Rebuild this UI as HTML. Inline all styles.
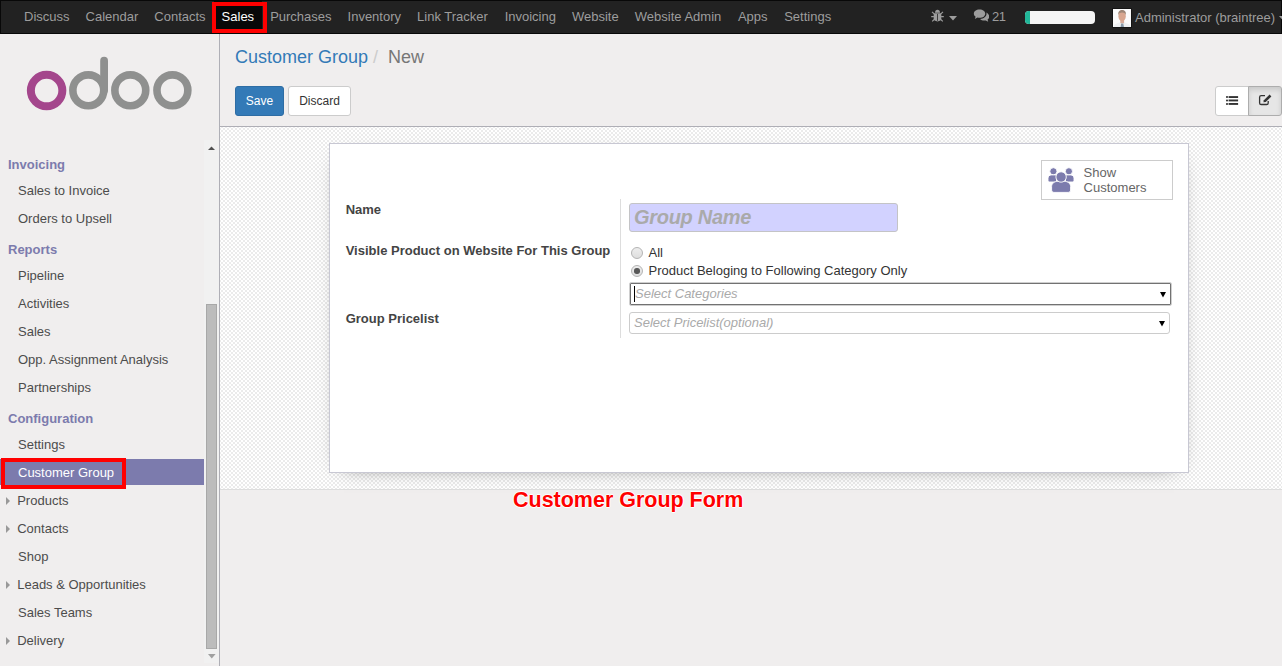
<!DOCTYPE html>
<html><head><meta charset="utf-8">
<style>
*{box-sizing:border-box}
html,body{margin:0;padding:0;width:1282px;height:666px;overflow:hidden;background:#f0eeee;font-family:"Liberation Sans",sans-serif;font-size:13px;color:#4c4c4c}
.a{position:absolute;white-space:nowrap}
#nav{position:absolute;left:0;top:0;width:1282px;height:34px;background:#222;border:1px solid #080808}
#nav ul{margin:0;padding:0;list-style:none;position:absolute;left:15px;top:0;display:flex;height:32px}
#nav li a{display:block;padding:0 8px;line-height:32px;color:#9d9d9d;white-space:nowrap}
#nav li.act a{background:#080808;color:#fff}
.red{position:absolute;border:4px solid #f00}
#side{position:absolute;left:0;top:34px;width:220px;height:632px;background:#f0eeee;border-right:1px solid #afafb6}
#cp{position:absolute;left:220px;top:34px;width:1062px;height:93px;background:#f0eeee;border-bottom:1px solid #afafb6}
#bgwrap{position:absolute;left:220px;top:127px;width:1062px;height:363px;border-bottom:1px solid #ddd}
#sheet{position:absolute;left:329px;top:143px;width:860px;height:330px;background:#fff;border:1px solid #c8c8d3;box-shadow:0 5px 20px -15px rgba(0,0,0,.85)}
.hdr{position:absolute;left:8px;font-weight:bold;color:#7c7bad;line-height:18px;white-space:nowrap}
.itm{position:absolute;left:0;width:204px;padding:5px 0 3px 18px;color:#4c4c4c;line-height:18px;white-space:nowrap}
.itm.act{background:#7c7bad;color:#fff}
.car{position:absolute;left:6px;top:10px;width:0;height:0;border-top:4px solid transparent;border-bottom:4px solid transparent;border-left:4px solid #999}
.lbl{position:absolute;left:345.7px;font-weight:bold;color:#444;white-space:nowrap;line-height:18px}
.btn{position:absolute;height:30px;border:1px solid #ccc;border-radius:3px;font-size:12px;line-height:28px;text-align:center}
.ph{color:#aaa;font-style:italic}
</style></head><body>

<div id="nav">
  <ul>
    <li><a>Discuss</a></li>
    <li><a>Calendar</a></li>
    <li><a>Contacts</a></li>
    <li class="act"><a>Sales</a></li>
    <li><a>Purchases</a></li>
    <li><a>Inventory</a></li>
    <li><a>Link Tracker</a></li>
    <li style="margin-left:0.8px"><a>Invoicing</a></li>
    <li><a>Website</a></li>
    <li style="margin-left:0.1px"><a>Website Admin</a></li>
    <li style="margin-left:0.7px"><a>Apps</a></li>
    <li style="margin-left:0.6px"><a>Settings</a></li>
  </ul>
  <!-- bug icon -->
  <svg class="a" style="left:928.2px;top:7px" width="17" height="17" viewBox="929 8 17 17">
    <g fill="#9d9d9d">
      <path d="M935 12.7C935 10.9 936 9.8 937.5 9.8S940 10.9 940 12.7Z"/>
      <path d="M933.7 13.2H941.3V18.6C941.3 20.3 939.9 21.4 937.5 21.4S933.7 20.3 933.7 18.6Z"/>
    </g>
    <path d="M932 11.8L934.2 13.9M943 11.8L940.8 13.9M931.2 16.6H933.9M943.8 16.6H941.1M932.2 21.4L934.2 19.5M942.8 21.4L940.8 19.5" stroke="#9d9d9d" stroke-width="1.1" fill="none"/>
    <rect x="937.1" y="13.8" width="0.9" height="7" fill="#333"/>
  </svg>
  <svg class="a" style="left:947.8px;top:15px" width="8" height="5" viewBox="0 0 8 5"><path d="M0 0H8L4 4.6Z" fill="#9d9d9d"/></svg>
  <!-- comments icon -->
  <svg class="a" style="left:971.5px;top:8.3px" width="16.8" height="13.1" viewBox="0 0 18 14">
    <path d="M7 0.6C3.4 0.6 0.9 2.6 0.9 5c0 1.3 0.7 2.4 1.9 3.2L2 10.6 4.8 9.1C5.5 9.3 6.2 9.4 7 9.4c3.6 0 6.1-2 6.1-4.4S10.6 0.6 7 0.6Z" fill="#9d9d9d"/>
    <path d="M14.2 3.8c0.2 0.4 0.3 0.8 0.3 1.2 0 3-3 5.4-6.9 5.6 1 1.1 2.6 1.8 4.4 1.8 0.6 0 1.2-0.1 1.7-0.2l2.6 1.4-0.7-2.3c1.2-0.7 1.9-1.8 1.9-3 0-1.8-1.3-3.5-3.3-4.5Z" fill="#9d9d9d"/>
  </svg>
  <div class="a" style="left:991px;top:0;line-height:32px;color:#9d9d9d;letter-spacing:-0.6px">21</div>
  <div class="a" style="left:1024px;top:10px;width:70px;height:13px;background:#f5f5f5;border-radius:4px;overflow:hidden"><div style="width:5px;height:13px;background:#21b799"></div></div>
  <!-- avatar -->
  <svg class="a" style="left:1111px;top:7px" width="20" height="20" viewBox="-1 -1 20 20">
    <rect x="-1" y="-1" width="20" height="20" fill="#151515"/>
    <rect width="18" height="18" fill="#fbfbfb"/>
    <path d="M0.5 18C1 15.2 4 13.6 9 13.6S17 15.2 17.5 18Z" fill="#eef0f2"/>
    <rect x="7.3" y="11" width="3.8" height="3.2" fill="#d9ab98"/>
    <ellipse cx="9.1" cy="7.2" rx="3.7" ry="5" fill="#d8a68f"/>
    <path d="M5.2 6.4C4.9 2.4 6.6 1 9.1 1S13.3 2.4 13 6.4C12.6 4.6 11.3 3.6 9.1 3.6S5.6 4.6 5.2 6.4Z" fill="#9e8676"/>
    <path d="M8.1 14.6H10.3L10.9 18H7.6Z" fill="#8798a8"/>
  </svg>
  <div class="a" style="left:1134px;top:1px;line-height:32px;color:#9d9d9d">Administrator (braintree)</div>
  <svg class="a" style="left:1278px;top:15px" width="8" height="5" viewBox="0 0 8 5"><path d="M0 0H8L4 4.6Z" fill="#9d9d9d"/></svg>
</div>
<div class="red" style="left:212px;top:2px;width:55px;height:31px"></div>

<!-- SIDEBAR -->
<div id="side">
  <svg class="a" style="left:0;top:0" width="219" height="106" viewBox="0 34 219 106">
    <circle cx="46.6" cy="90.6" r="15.75" fill="none" stroke="#a4468c" stroke-width="8"/>
    <circle cx="88.3" cy="90.3" r="15.45" fill="none" stroke="#8f908f" stroke-width="7.6"/>
    <line x1="104.1" y1="60.7" x2="104.1" y2="90.3" stroke="#8f908f" stroke-width="7.8" stroke-linecap="round"/>
    <circle cx="130.3" cy="90.3" r="15.45" fill="none" stroke="#8f908f" stroke-width="7.6"/>
    <circle cx="172.4" cy="90.3" r="15.45" fill="none" stroke="#8f908f" stroke-width="7.6"/>
  </svg>
  <!-- scroll area -->
  <div class="a" style="left:0;top:106px;width:219px;height:523px;overflow:hidden">
    <div style="position:absolute;left:0;top:-140px;width:219px;height:800px">
      <div class="hdr" style="top:155.5px">Invoicing</div>
      <div class="itm" style="top:177px">Sales to Invoice</div>
      <div class="itm" style="top:205px">Orders to Upsell</div>
      <div class="hdr" style="top:240.5px">Reports</div>
      <div class="itm" style="top:262px">Pipeline</div>
      <div class="itm" style="top:290px">Activities</div>
      <div class="itm" style="top:318px">Sales</div>
      <div class="itm" style="top:346px">Opp. Assignment Analysis</div>
      <div class="itm" style="top:374px">Partnerships</div>
      <div class="hdr" style="top:409.5px">Configuration</div>
      <div class="itm" style="top:431px">Settings</div>
      <div class="itm act" style="top:459px">Customer Group</div>
      <div class="itm" style="top:487px;padding-left:17.2px"><span class="car"></span>Products</div>
      <div class="itm" style="top:515px;padding-left:17.2px"><span class="car"></span>Contacts</div>
      <div class="itm" style="top:543px">Shop</div>
      <div class="itm" style="top:571px;padding-left:17.2px"><span class="car"></span>Leads &amp; Opportunities</div>
      <div class="itm" style="top:599px">Sales Teams</div>
      <div class="itm" style="top:627px;padding-left:17.2px"><span class="car"></span>Delivery</div>
    </div>
    <!-- scrollbar -->
    <div class="a" style="left:204px;top:0;width:15px;height:523px;background:#f1f1f1">
      <svg class="a" style="left:4px;top:5.5px" width="7" height="5" viewBox="0 0 7 5"><path d="M0 4H7L3.5 0.4Z" fill="#505050"/></svg>
      <div class="a" style="left:2px;top:164px;width:11px;height:345px;background:#bcbcbc;border:1px solid #a8a8a8"></div>
      <svg class="a" style="left:3.8px;top:513.5px" width="8" height="5" viewBox="0 0 8 5"><path d="M0 0H7.6L3.8 4.4Z" fill="#a0a0a0"/></svg>
    </div>
  </div>
</div>
<div class="red" style="left:1px;top:458px;width:125px;height:31px"></div>

<!-- CONTROL PANEL -->
<div id="cp">
  <div class="a" style="left:15px;top:11.6px;font-size:18px;line-height:22px"><span style="color:#337ab7">Customer Group</span><span style="color:#ccc;padding:0 5px">/&nbsp;</span><span style="color:#777">New</span></div>
  <div class="btn" style="left:15px;top:52px;width:49px;background:#337ab7;border-color:#2e6da4;color:#fff">Save</div>
  <div class="btn" style="left:68px;top:52px;width:63px;background:#fff;color:#333">Discard</div>
  <div class="a" style="left:995px;top:52px;width:67px;height:30px">
    <div class="a" style="left:0;top:0;width:34px;height:30px;background:#fff;border:1px solid #ccc;border-radius:3px 0 0 3px"></div>
    <div class="a" style="left:33px;top:0;width:34px;height:30px;background:#e6e6e6;border:1px solid #adadad;border-radius:0 3px 3px 0;box-shadow:inset 0 3px 5px rgba(0,0,0,.125)"></div>
    <svg class="a" style="left:5px;top:5px" width="60" height="20" viewBox="1220 91 60 20">
      <g fill="#333"><circle cx="1227" cy="97.05" r="1.05"/><circle cx="1227" cy="100.45" r="1.05"/><circle cx="1227" cy="103.95" r="1.05"/>
      <rect x="1228.6" y="96.1" width="9.5" height="1.9"/><rect x="1228.6" y="99.5" width="9.5" height="1.9"/><rect x="1228.6" y="103" width="9.5" height="1.9"/></g>
      <path d="M1265 95.7H1261.2C1260.2 95.7 1259.6 96.3 1259.6 97.3V102.9C1259.6 103.9 1260.2 104.5 1261.2 104.5H1266.6C1267.6 104.5 1268.2 103.9 1268.2 102.9V101" fill="none" stroke="#333" stroke-width="1.3"/>
      <path d="M1263.4 102.3L1263.9 100.2L1269.6 94.6L1271.4 96.4L1265.7 102Z" fill="#333"/>
    </svg>
  </div>
</div>

<!-- CONTENT BG -->
<div id="bgwrap">
  <svg width="1062" height="362" style="display:block">
    <defs><pattern id="ck" x="3" y="1" width="4" height="4" patternUnits="userSpaceOnUse">
      <rect width="4" height="4" fill="#fff"/><rect width="2" height="2" fill="#ebebeb"/><rect x="2" y="2" width="2" height="2" fill="#ebebeb"/>
    </pattern></defs>
    <rect width="1062" height="362" fill="url(#ck)" shape-rendering="crispEdges"/>
  </svg>
</div>
<div id="sheet"></div>

<!-- FORM -->
<div class="lbl" style="top:200.5px">Name</div>
<div class="lbl" style="top:242px">Visible Product on Website For This Group</div>
<div class="lbl" style="top:309.5px">Group Pricelist</div>
<div class="a" style="left:620px;top:199px;width:1px;height:139px;background:#ddd"></div>

<div class="a" style="left:629px;top:203px;width:269px;height:29px;background:#d2d2ff;border:1px solid #c4c4c6;border-radius:3px"></div>
<div class="a ph" style="left:634px;top:205px;font-size:20px;line-height:24px;font-weight:bold;color:#aaa;letter-spacing:-0.3px">Group Name</div>

<div class="a" style="left:631px;top:247px;width:12px;height:12px;border-radius:50%;border:1px solid #b4b4b4;background:linear-gradient(#ededed,#dedede)"></div>
<div class="a" style="left:648.5px;top:244.3px;line-height:18px;color:#333">All</div>
<div class="a" style="left:631px;top:265px;width:12px;height:12px;border-radius:50%;border:1px solid #b4b4b4;background:linear-gradient(#ededed,#dedede)"><div style="position:absolute;left:2.2px;top:2.2px;width:5.4px;height:5.4px;border-radius:50%;background:#585858"></div></div>
<div class="a" style="left:648.5px;top:262.3px;line-height:18px;color:#333">Product Beloging to Following Category Only</div>

<div class="a" style="left:629px;top:282px;width:543px;height:24px;background:#fff;border:1px solid #cfcfcf;box-shadow:inset 0 0 0 1px #727272;border-radius:2px"></div>
<div class="a" style="left:634px;top:286px;width:1px;height:16px;background:#000"></div>
<div class="a ph" style="left:635px;top:285px;line-height:18px">Select Categories</div>
<svg class="a" style="left:1160.3px;top:292px" width="6" height="6" viewBox="0 0 6 6"><path d="M0 0H6L3 5.6Z" fill="#000"/></svg>

<div class="a" style="left:629px;top:312px;width:541px;height:22px;background:#fff;border:1px solid #ccc;border-radius:3px"></div>
<div class="a ph" style="left:634px;top:314px;line-height:18px">Select Pricelist(optional)</div>
<svg class="a" style="left:1159.2px;top:321px" width="6" height="6" viewBox="0 0 6 6"><path d="M0 0H6L3 5.6Z" fill="#000"/></svg>

<!-- show customers -->
<div class="a" style="left:1041px;top:160px;width:132px;height:40px;border:1px solid #ccc;background:#fff"></div>
<svg class="a" style="left:1046px;top:166px" width="30" height="28" viewBox="1046 166 30 28">
  <g fill="#7c7bad" stroke="#fff" stroke-width="0.9">
    <circle cx="1053.4" cy="171.3" r="3.6"/>
    <circle cx="1068.9" cy="171.3" r="3.6"/>
    <path d="M1048 180.3V178.2C1048 176.2 1049.5 174.9 1051.6 174.9H1056.5V182H1049.7C1048.7 182 1048 181.3 1048 180.3Z"/>
    <path d="M1074 180.3V178.2C1074 176.2 1072.5 174.9 1070.4 174.9H1065.5V182H1072.3C1073.3 182 1074 181.3 1074 180.3Z"/>
    <path d="M1051.6 190V186.5C1051.6 183.6 1054.4 181.3 1058 181.3H1064.2C1067.8 181.3 1070.6 183.6 1070.6 186.5V190C1070.6 191.4 1069.6 192.4 1068.2 192.4H1054C1052.6 192.4 1051.6 191.4 1051.6 190Z"/>
    <circle cx="1061.1" cy="177" r="5.2"/>
  </g>
</svg>
<div class="a" style="left:1083.6px;top:165px;line-height:15px;color:#666">Show<br>Customers</div>

<!-- annotation -->
<div class="a" style="left:513px;top:486.3px;font-size:22.75px;line-height:26px;font-weight:bold;color:#f00;transform:scaleX(0.944);transform-origin:0 0;text-shadow:1px 0 0 #fff,-1px 0 0 #fff,0 1px 0 #fff,0 -1px 0 #fff">Customer Group Form</div>

</body></html>
